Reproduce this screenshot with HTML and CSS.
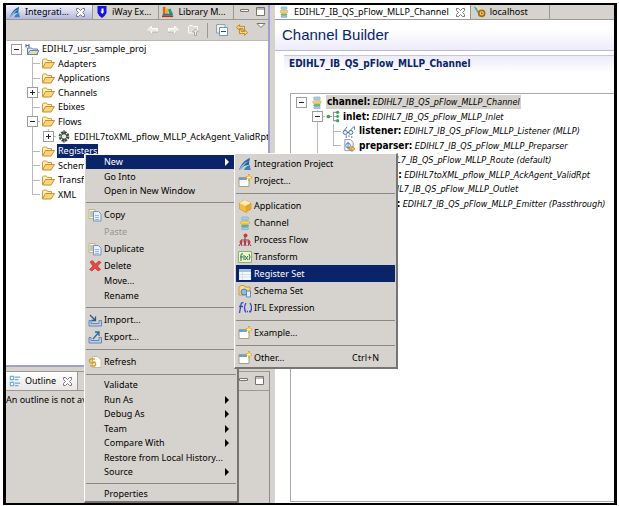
FILE: index.html
```html
<!DOCTYPE html>
<html lang="en">
<head>
<meta charset="utf-8">
<title>Channel Builder</title>
<link rel="stylesheet" href="styles.css">
</head>
<body>
<svg class="sprite" aria-hidden="true">
  <symbol id="folder" viewBox="0 0 14 12"><path d="M1.500 10V2.500l1-1h3l1 1.500h4V5" fill="#fff0b8" stroke="#cf9a3a"/><path d="M1.500 10.500L4.500 5h9L10 10.500z" fill="#fbd47c" stroke="#c98f2e"/></symbol>
  <symbol id="project" viewBox="0 0 14 12"><path d="M2.500 11V4.500h4l1 1h5V11z" fill="#dbe9fb" stroke="#4f7fc4"/><path d="M2.500 11L5 7h9l-2.500 4z" fill="#fbd98a" stroke="#4f8fc8"/><path d="M1 4V1l1.500 1.500L4 1v3" fill="none" stroke="#2b4f9c"/></symbol>
  <symbol id="gear" viewBox="0 0 14 14"><circle cx="7" cy="7" r="4.500" fill="none" stroke="#3c4a46" stroke-width="2.500" stroke-dasharray="2.400 1.100"/><circle cx="7" cy="7" r="3" fill="#e7f1e9" stroke="#333"/><path d="M7 0v4M5 2l2 2 2-2M5 12l2-2 2 2M7 10v4" fill="none" stroke="#333"/><path d="M2 5l3 2-3 2" fill="none" stroke="#4a9a58"/></symbol>
  <symbol id="swoosh" viewBox="0 0 14 14"><path d="M1 13C3 7 7 3 12 1c-1 3-1 5-1 7-3 0-6 1-10 5z" fill="#23639e"/><path d="M1 13c3-6 6-8 10-9-4 3-6 5-7 8z" fill="#7db4dc"/><path d="M6 13c1-3 3-4 6-5 0 2 0 3 1 5z" fill="#3b82bd"/></symbol>
  <symbol id="close" viewBox="0 0 11 11"><path d="M1.500 1.500h2l2 2 2-2h2v2l-2 2 2 2v2h-2l-2-2-2 2h-2v-2l2-2-2-2z" fill="#fff" stroke="#77777c"/></symbol>
  <symbol id="shield" viewBox="0 0 11 12"><path d="M1 0h9v7L8 10 5.500 12 3 10 1 7z" fill="#1414e0"/><path d="M5 2.500h2v4H5zM3.800 5.500h4L5.800 8z" fill="#fff"/></symbol>
  <symbol id="books" viewBox="0 0 14 12"><path d="M1 0h3v10H1z" fill="#e1661b"/><path d="M4 2h3v8H4z" fill="#f0b323"/><path d="M7 3l3-1 3 7-4 1z" fill="#2e9a5c"/><path d="M0 10h13v2H0z" fill="#b33518"/><path d="M1 8h11v2H1z" fill="#2c6fb7"/></symbol>
  <symbol id="minimize" viewBox="0 0 10 10"><path d="M.5 2.500h8v2h-8z" fill="#fff" stroke="#77746c"/></symbol>
  <symbol id="maximize" viewBox="0 0 10 10"><path d="M.5.5h8v8h-8z" fill="#fff" stroke="#77746c"/><path d="M0 2h9" stroke="#77746c"/></symbol>
  <symbol id="back" viewBox="0 0 12 10"><path d="M.5 5l4-4v2.500h6v3h-6V9z" fill="#eceae6" stroke="#fff"/><path d="M1 5.500l4 4M5 7h6" stroke="#b5b2ab" fill="none"/></symbol>
  <symbol id="forward" viewBox="0 0 12 10"><path d="M11.500 5l-4-4v2.500h-6v3h6V9z" fill="#eceae6" stroke="#fff"/><path d="M11 5.500l-4 4M1 7h6" stroke="#b5b2ab" fill="none"/></symbol>
  <symbol id="up" viewBox="0 0 12 12"><path d="M1.500 9V2.500l1-1h3l1 1h4V9z" fill="#dedbd6" stroke="#fbfaf8"/><path d="M7.500 11.500V8h-2l3-3 3 3h-2v3.500z" fill="#eee" stroke="#aaa79f"/></symbol>
  <symbol id="collapse" viewBox="0 0 12 12"><path d="M3 9H.5V.5H9V3" fill="#f5f1d8" stroke="#88a4c2"/><path d="M3.500 3.500h8v8h-8z" fill="#fff" stroke="#6b94c4"/><path d="M5 7.500h5" stroke="#1f4f96"/></symbol>
  <symbol id="sync" viewBox="0 0 14 14"><path d="M.5 4L4 .8v2h6v5H8V5.200H4v2z" fill="#fbd77a" stroke="#b77f21"/><path d="M13.500 10L10 13.200v-2H4v-5h2v2.600h4v-2z" fill="#fbd77a" stroke="#b77f21"/></symbol>
  <symbol id="chevron" viewBox="0 0 10 6"><path d="M1 .5h8L5 4.500z" fill="#fff" stroke="#77746c"/></symbol>
  <symbol id="channel" viewBox="0 0 12 14"><rect x="2.500" y="1" width="7" height="3" rx="1" fill="#a7cdf0" stroke="#7ba4cc" stroke-width=".6"/><rect x="1.500" y="5" width="9" height="3" rx="1" fill="#f8d45f" stroke="#c9a23b" stroke-width=".6"/><rect x="2.500" y="9" width="7" height="2" rx="1" fill="#72bb7f" stroke="#549e66" stroke-width=".6"/><rect x="2.500" y="11.500" width="7" height="2" rx="1" fill="#a7cdf0" stroke="#6f9acb" stroke-width=".6"/></symbol>
  <symbol id="localhost" viewBox="0 0 14 14"><path d="M0 1l6 2 2 6-4-1z" fill="#43a0b8"/><path d="M2 0h4l3 4-4 2z" fill="#e8e0a0"/><circle cx="9" cy="8.500" r="3.500" fill="#f4cf62" stroke="#a66b1c" stroke-width="2"/><circle cx="9" cy="8.500" r="1" fill="#7c4a18"/></symbol>
  <symbol id="inlet" viewBox="0 0 14 14"><path d="M2 7h4M12 2.500H7.500v9H12" fill="none" stroke="#8e9a92" stroke-width="1.200"/><path d="M8 7h4" stroke="#8e9a92"/><g fill="#3f9d5b"><circle cx="2" cy="7" r="2"/><circle cx="12" cy="2.500" r="1.700"/><circle cx="12" cy="7" r="1.500"/><circle cx="12" cy="11.500" r="1.700"/></g></symbol>
  <symbol id="listener" viewBox="0 0 14 14"><g fill="#e9f2fb" stroke="#44699e"><circle cx="3" cy="8" r="2.200"/><circle cx="9" cy="8" r="2.200"/><path d="M1 7l4-5M8 6l4-4h1v3M5 8h2" fill="none"/></g><path d="M4 11v3M7 11v2M10 12v2" stroke="#44699e"/></symbol>
  <symbol id="preparser" viewBox="0 0 14 14"><path d="M2.500.5h6l3 3v9h-9z" fill="#f5f8fd" stroke="#8797b3"/><circle cx="6" cy="7" r="2.500" fill="none" stroke="#5b77a8"/><path d="M6 3v8" stroke="#5b77a8"/><path d="M7 9.500h3v-2l3.500 3-3.500 3v-2H7z" fill="#f9bd4f" stroke="#c07a1c" stroke-width=".8"/></symbol>
  <symbol id="copy" viewBox="0 0 14 14"><path d="M1 1.500h6v9H1z" fill="#fff5d2" stroke="#c8b473"/><path d="M2 4h4M2 6h4M2 8h4" stroke="#7495c6"/><path d="M5.500 3.500h5l2.500 2.500v7H5.500z" fill="#e8f1fc" stroke="#7894bd"/><path d="M7 7.500h4M7 9.500h4M7 11.500h4" stroke="#9ab4d8"/></symbol>
  <symbol id="delete" viewBox="0 0 14 14"><path d="M2 3l2.500-1.500L7.500 5 11 2l2 1.500L9.500 7l3 3.500L10 12 7 9l-3 3-2.500-1.500L5 7z" fill="#e34a4a" stroke="#c02a30" stroke-width=".7"/></symbol>
  <symbol id="import" viewBox="0 0 14 14"><path d="M1 7.500h2v3h8v-3h2.500V13H1z" fill="#b9d0ea" stroke="#6488b3"/><path d="M2 2l5 5M7.500 3.500v4h-4" fill="none" stroke="#2d5785" stroke-width="1.300"/></symbol>
  <symbol id="export" viewBox="0 0 14 14"><path d="M1 7.500h2v3h8v-3h2.500V13H1z" fill="#b9d0ea" stroke="#6488b3"/><path d="M5 9l6-7M7 2h4v4" fill="none" stroke="#2d6ba5" stroke-width="1.300"/></symbol>
  <symbol id="refresh" viewBox="0 0 14 14"><path d="M4.500 1.500h5l3.500 3v8H4.500z" fill="#fff" stroke="#c9b98d"/><path d="M7 4H4a2 2 0 0 0-1 4h3M2 11h3a2 2 0 0 0 1-4H4" fill="none" stroke="#dba02c" stroke-width="1.500"/></symbol>
  <symbol id="newproject" viewBox="0 0 14 14"><path d="M1 3.500h10v9H1z" fill="#fff" stroke="#a8a078"/><path d="M1 4h8v2H1z" fill="#62a2dc"/><path d="M11 0v7M7.500 3.500h7" stroke="#dfa52d" stroke-width="2"/><path d="M11 1.500v4M9 3.500h4" stroke="#fff3b0"/></symbol>
  <symbol id="application" viewBox="0 0 14 14"><path d="M7 1l6 3v6l-5 3.500L1.500 10V4z" fill="#f5bd3f" stroke="#c99639" stroke-width=".7"/><path d="M7 1l6 3-5.500 3-6-3z" fill="#fff0b2"/><path d="M7.500 7L13 4v6l-5 3.500z" fill="#e8a32b"/></symbol>
  <symbol id="flow" viewBox="0 0 14 14"><path d="M7 4v3M3 10V7h8v3" fill="none" stroke="#555"/><g fill="#ce3846"><circle cx="7.500" cy="2.500" r="2"/><circle cx="3" cy="9" r="1.500"/><circle cx="7" cy="8.500" r="1.500"/><circle cx="11" cy="9" r="1.500"/></g><path d="M1 13l2-3 1 3M6 13l1-4 1 4M10 13l1-3 2 3" fill="none" stroke="#a33243"/></symbol>
  <symbol id="transform" viewBox="0 0 14 14"><path d="M.5 1.500h13v11H.5z" fill="#f2f3c7" stroke="#8fae73"/><path d="M5 4q-2-1-2 1v6M2 7h3M6 5v5M7 6l3 4M10 6l-3 4M11 4q2 3 0 6" fill="none" stroke="#28775b"/></symbol>
  <symbol id="register" viewBox="0 0 14 14"><path d="M1 2h12v11H1z" fill="#f4f8fc"/><path d="M1 2h12v3H1z" fill="#a9c1dd"/><path d="M1 7.500h12M1 10h12M4.500 5v8" stroke="#d5dfeb"/></symbol>
  <symbol id="schema" viewBox="0 0 14 14"><path d="M1 11V3l2-1.500h3L7 3h5v8z" fill="#fcdc89" stroke="#c9983e"/><circle cx="6" cy="8" r="3" fill="#8eb8e8" stroke="#4d80bd"/><path d="M8.500 7h4v6h-4z" fill="#e6effb" stroke="#608bc1"/></symbol>
  <symbol id="ifl" viewBox="0 0 14 14"><path d="M5.500 2q-2-1-2.500 1.500L1.500 12M1 5.500h4M8 2q-3 5 0 9.500M12 2q3 5 0 9.500M9 10.500h1M11 10.500h1" fill="none" stroke="#3348c4" stroke-width="1.300"/></symbol>
  <symbol id="outline" viewBox="0 0 14 14"><path d="M1.500 1.500h4v4h-4zM1.500 8.500h4v4h-4z" fill="#fff" stroke="#3188cf"/><path d="M7 2.500h6M7 5.500h4M7 9.500h6M7 12.500h4" stroke="#3188cf"/></symbol>
</svg>

<main class="frame">
  <section class="sidebar">
    <div class="view explorer">
      <div class="tabs">
        <button class="tab tab-active"><svg class="icon"><use href="#swoosh"/></svg><span>Integrati...</span><svg class="close"><use href="#close"/></svg></button>
        <button class="tab tab-idle"><svg class="icon"><use href="#shield"/></svg><span>iWay Ex...</span></button>
        <button class="tab tab-idle"><svg class="icon"><use href="#books"/></svg><span>Library M...</span></button>
        <div class="window-buttons window-buttons-top">
          <button aria-label="Minimize"><svg class="sizer"><use href="#minimize"/></svg></button>
          <button aria-label="Maximize"><svg class="sizer"><use href="#maximize"/></svg></button>
        </div>
      </div>
      <div class="toolbar">
        <button aria-label="Back"><svg class="tool"><use href="#back"/></svg></button>
        <button aria-label="Forward"><svg class="tool"><use href="#forward"/></svg></button>
        <button aria-label="Up"><svg class="tool"><use href="#up"/></svg></button>
        <span class="rule"></span>
        <button aria-label="Collapse all"><svg class="tool"><use href="#collapse"/></svg></button>
        <button aria-label="Link with editor"><svg class="tool"><use href="#sync"/></svg></button>
        <button aria-label="View menu" class="view-menu"><svg class="arrow-down"><use href="#chevron"/></svg></button>
      </div>
      <div class="tree-area">
        <ul class="tree">
          <li><i class="cell box open"></i><svg class="node"><use href="#project"/></svg><span>EDIHL7_usr_sample_proj</span></li>
          <li><i class="cell"></i><i class="cell tee"></i><svg class="node"><use href="#folder"/></svg><span>Adapters</span></li>
          <li><i class="cell"></i><i class="cell tee"></i><svg class="node"><use href="#folder"/></svg><span>Applications</span></li>
          <li><i class="cell"></i><i class="cell tee box"></i><svg class="node"><use href="#folder"/></svg><span>Channels</span></li>
          <li><i class="cell"></i><i class="cell tee"></i><svg class="node"><use href="#folder"/></svg><span>Ebixes</span></li>
          <li><i class="cell"></i><i class="cell tee box open"></i><svg class="node"><use href="#folder"/></svg><span>Flows</span></li>
          <li><i class="cell"></i><i class="cell line"></i><i class="cell elbow box"></i><svg class="node"><use href="#gear"/></svg><span>EDIHL7toXML_pflow_MLLP_AckAgent_ValidRpt</span></li>
          <li><i class="cell"></i><i class="cell tee"></i><svg class="node"><use href="#folder"/></svg><span class="selected">Registers</span></li>
          <li><i class="cell"></i><i class="cell tee"></i><svg class="node"><use href="#folder"/></svg><span>Schemas</span></li>
          <li><i class="cell"></i><i class="cell tee"></i><svg class="node"><use href="#folder"/></svg><span>Transforms</span></li>
          <li><i class="cell"></i><i class="cell elbow"></i><svg class="node"><use href="#folder"/></svg><span>XML</span></li>
        </ul>
      </div>
    </div>
    <div class="view outline">
      <div class="tabs">
        <button class="tab tab-plain"><svg class="icon"><use href="#outline"/></svg><span>Outline</span><svg class="close"><use href="#close"/></svg></button>
        <div class="window-buttons">
          <button aria-label="Minimize"><svg class="sizer"><use href="#minimize"/></svg></button>
          <button aria-label="Maximize"><svg class="sizer"><use href="#maximize"/></svg></button>
        </div>
      </div>
      <p>An outline is not available.</p>
    </div>
  </section>

  <section class="editor">
    <div class="tabs">
      <button class="tab tab-editor"><svg class="icon"><use href="#channel"/></svg><span>EDIHL7_IB_QS_pFlow_MLLP_Channel</span><svg class="close"><use href="#close"/></svg></button>
      <button class="tab tab-host"><svg class="icon"><use href="#localhost"/></svg><span>localhost</span></button>
    </div>
    <h1>Channel Builder</h1>
    <h2>EDIHL7_IB_QS_pFlow_MLLP_Channel</h2>
    <div class="canvas">
      <ul class="tree tree-channel">
        <li><i class="cell box open"></i><svg class="node"><use href="#channel"/></svg><span class="current"><b>channel:</b> <em>EDIHL7_IB_QS_pFlow_MLLP_Channel</em></span></li>
        <li><i class="cell"></i><i class="cell tee box open"></i><svg class="node"><use href="#inlet"/></svg><span><b>inlet:</b> <em>EDIHL7_IB_QS_pFlow_MLLP_Inlet</em></span></li>
        <li><i class="cell"></i><i class="cell line"></i><i class="cell tee"></i><svg class="node"><use href="#listener"/></svg><span><b>listener:</b> <em>EDIHL7_IB_QS_pFlow_MLLP_Listener (MLLP)</em></span></li>
        <li><i class="cell"></i><i class="cell line"></i><i class="cell elbow"></i><svg class="node"><use href="#preparser"/></svg><span><b>preparser:</b> <em>EDIHL7_IB_QS_pFlow_MLLP_Preparser</em></span></li>
        <li><i class="cell"></i><i class="cell tee box open"></i><svg class="node"><use href="#flow"/></svg><span><b>route:</b> <em>EDIHL7_IB_QS_pFlow_MLLP_Route (default)</em></span></li>
        <li><i class="cell"></i><i class="cell line"></i><i class="cell elbow"></i><svg class="node"><use href="#gear"/></svg><span><b>process:</b> <em>EDIHL7toXML_pflow_MLLP_AckAgent_ValidRpt</em></span></li>
        <li><i class="cell"></i><i class="cell elbow box open"></i><svg class="node"><use href="#inlet"/></svg><span><b>outlet:</b> <em>EDIHL7_IB_QS_pFlow_MLLP_Outlet</em></span></li>
        <li><i class="cell"></i><i class="cell"></i><i class="cell elbow"></i><svg class="node"><use href="#listener"/></svg><span><b>emitter:</b> <em>EDIHL7_IB_QS_pFlow_MLLP_Emitter (Passthrough)</em></span></li>
      </ul>
    </div>
  </section>

  <nav class="menu context-menu" aria-label="Context menu">
    <ul>
      <li class="more"><button class="active">New</button></li>
      <li><button>Go Into</button></li>
      <li><button>Open in New Window</button></li>
    </ul>
    <ul>
      <li class="tall"><button><svg><use href="#copy"/></svg>Copy</button></li>
      <li class="tall"><button disabled>Paste</button></li>
      <li class="tall"><button><svg><use href="#copy"/></svg>Duplicate</button></li>
      <li class="tall"><button><svg><use href="#delete"/></svg>Delete</button></li>
      <li><button>Move...</button></li>
      <li><button>Rename</button></li>
    </ul>
    <ul>
      <li class="tall"><button><svg><use href="#import"/></svg>Import...</button></li>
      <li class="tall"><button><svg><use href="#export"/></svg>Export...</button></li>
    </ul>
    <ul>
      <li class="tall"><button><svg><use href="#refresh"/></svg>Refresh</button></li>
    </ul>
    <ul>
      <li><button>Validate</button></li>
      <li class="more"><button>Run As</button></li>
      <li class="more"><button>Debug As</button></li>
      <li class="more"><button>Team</button></li>
      <li class="more"><button>Compare With</button></li>
      <li><button>Restore from Local History...</button></li>
      <li class="more"><button>Source</button></li>
    </ul>
    <ul>
      <li><button>Properties</button></li>
    </ul>
  </nav>

  <nav class="menu submenu" aria-label="New">
    <ul>
      <li class="tall"><button><svg><use href="#swoosh"/></svg>Integration Project</button></li>
      <li class="tall"><button><svg><use href="#newproject"/></svg>Project...</button></li>
    </ul>
    <ul>
      <li class="tall"><button><svg><use href="#application"/></svg>Application</button></li>
      <li class="tall"><button><svg><use href="#channel"/></svg>Channel</button></li>
      <li class="tall"><button><svg><use href="#flow"/></svg>Process Flow</button></li>
      <li class="tall"><button><svg><use href="#transform"/></svg>Transform</button></li>
      <li class="tall"><button class="active"><svg><use href="#register"/></svg>Register Set</button></li>
      <li class="tall"><button><svg><use href="#schema"/></svg>Schema Set</button></li>
      <li class="tall"><button><svg><use href="#ifl"/></svg>IFL Expression</button></li>
    </ul>
    <ul>
      <li class="tall"><button><svg><use href="#newproject"/></svg>Example...</button></li>
    </ul>
    <ul>
      <li class="tall"><button><svg><use href="#newproject"/></svg>Other...<kbd>Ctrl+N</kbd></button></li>
    </ul>
  </nav>
</main>
</body>
</html>
```
FILE: styles.css
```css
* { box-sizing: border-box; }

:root {
  --face: #d6d3ce;
  --navy: #0a246a;
  --edge: #9a9894;
}

body {
  margin: 0;
  padding: 3px 2px 1px 3px;
  min-height: 100vh;
  display: flex;
  background: #fff;
  color: #000;
  font: 9px/14px "Noto Sans", "DejaVu Sans Condensed", sans-serif;
}

ul { list-style: none; margin: 0; padding: 0; }

b, em, h2 { font-family: "DejaVu Sans Condensed", "DejaVu Sans", sans-serif; }
b, h2 { font-size: 10px; }

button {
  border: 0;
  padding: 0;
  background: none;
  color: inherit;
  font: inherit;
  text-align: left;
  white-space: nowrap;
}

svg { display: block; flex: none; }
.sprite { position: absolute; width: 0; height: 0; }

.frame {
  position: relative;
  flex: 1;
  display: grid;
  grid-template-columns: 264px minmax(0, 1fr);
  column-gap: 5px;
  border: solid #000;
  border-width: 2px 3px;
  background: var(--face);
  overflow: hidden;
}

.sidebar {
  display: grid;
  grid-template-rows: minmax(0, 1fr) 132px;
  row-gap: 4px;
  min-width: 0;
}

.view {
  display: flex;
  flex-direction: column;
  min-width: 0;
  border-right: 1px solid #8d8d92;
}

.explorer {
  border-right: 2px solid #a0a0d0;
  border-bottom: 2px solid #a0a0d0;
}

.outline { border-top: 1px solid var(--edge); }
.outline p { margin: 0; line-height: 17px; white-space: nowrap; }

.tabs {
  display: flex;
  height: 15px;
  border-bottom: 1px solid var(--edge);
}

.outline .tabs { height: 19px; }

.tab {
  display: flex;
  align-items: center;
  gap: 4px;
  padding: 0 4px 0 3px;
  border-right: 1px solid var(--edge);
}

.tab .icon { width: 12px; height: 12px; }
.tab .close { width: 11px; height: 11px; margin-left: 2px; }

.tab-active { background: linear-gradient(#f4f4fc, #b4b8dc); }
.tab-active .close { margin-right: 2px; }
.tab-idle { padding-right: 7px; }
.tab-plain { background: linear-gradient(#fff, #e9e7e4); }
.tab-editor { background: #fff; }
.tab-host { padding-right: 21px; }

.window-buttons {
  display: flex;
  gap: 6px;
  margin-left: auto;
  padding: 2px 4px;
}

.window-buttons-top { padding: 0 2px; }
.sizer { width: 10px; height: 10px; }

.toolbar {
  display: flex;
  align-items: center;
  justify-content: flex-end;
  gap: 8px;
  height: 21px;
  padding-right: 2px;
  border-bottom: 1px solid #bbb8b2;
}

.tool { width: 12px; height: 12px; }
.rule { width: 1px; height: 15px; background: var(--edge); }
.view-menu { align-self: flex-start; padding-top: 3px; }
.arrow-down { width: 10px; height: 6px; }

.tree-area {
  flex: 1;
  padding: 1px 2px;
  background: #fff;
  overflow: hidden;
}

.tree {
  display: grid;
  grid-auto-rows: 1fr;
  height: 160px;
}

.tree-channel { height: 116px; }

.tree li {
  display: flex;
  align-items: center;
  white-space: nowrap;
}

.tree li > span { padding: 0 1px; margin-left: 1px; }
.tree .node { width: 14px; height: 13px; margin: 0 1px; }
.tree .selected { background: var(--navy); color: #fff; }
.tree .current { background: var(--face); }

.cell {
  display: grid;
  place-items: center;
  flex: none;
  align-self: stretch;
  width: 16px;
  background-repeat: no-repeat;
  --dash: linear-gradient(#b8b8b8, #b8b8b8);
}

.line {
  background-image: var(--dash);
  background-position: 8px 0;
  background-size: 1px 100%;
}

.tee, .elbow {
  background-image: var(--dash), var(--dash);
  background-position: 8px 0, 8px 50%;
  background-size: 1px 100%, 8px 1px;
}

.elbow { background-size: 1px 50%, 8px 1px; }

.box::before {
  content: "";
  width: 9px;
  height: 9px;
  border: 1px solid #9c9c9c;
  background:
    linear-gradient(#222, #222) center / 5px 1px no-repeat,
    linear-gradient(#222, #222) center / 1px 5px no-repeat,
    #fff;
}

.box.open::before {
  background: linear-gradient(#222, #222) center / 5px 1px no-repeat, #fff;
}

.editor {
  display: flex;
  flex-direction: column;
  min-width: 0;
  background: #fff;
}

.editor .tabs { background: var(--face); }

h1 {
  margin: 0;
  padding: 0 7px;
  border-bottom: 1px solid #b9b9d6;
  background: linear-gradient(#fff 30%, #eeecfa);
  color: var(--navy);
  font: 15px/30px "Liberation Sans", sans-serif;
}

h2 {
  margin: 4px 0 0 9px;
  padding: 0 5px;
  border-top: 1px solid #c6c6dc;
  background: linear-gradient(#ecebfa, #fff);
  color: var(--navy);
  line-height: 16px;
}

.canvas {
  flex: 1;
  margin: 21px 0 1px 15px;
  padding: 1px 2px;
  border: solid #a9a9a9;
  border-width: 1px 0 1px 1px;
  overflow: hidden;
}

.menu {
  position: absolute;
  border: 1px solid #fff;
  border-right: 2px solid #777570;
  border-bottom: 2px solid #777570;
  background: var(--face);
}

.context-menu { left: 78px; top: 149px; width: 155px; padding: 0 1px; }
.submenu { left: 228px; top: 148px; width: 164px; padding: 1px; }

.menu ul + ul {
  margin-top: 4px;
  padding-top: 3px;
  border-top: 1px solid #8b8984;
}

.menu li { height: 14px; }
.menu li:nth-child(even) { height: 15px; }
.menu li.tall { height: 17px; }

.menu button {
  display: flex;
  align-items: center;
  width: 100%;
  height: 100%;
  padding-left: 18px;
}

.menu svg { width: 14px; height: 14px; margin: 0 2px 0 -16px; }
.menu .active { background: var(--navy); color: #fff; }
.menu button:disabled { color: #96938e; }

.more button::after {
  content: "";
  margin: 0 7px 0 auto;
  border: 4px solid transparent;
  border-left-color: currentColor;
  border-right-width: 0;
}

.menu kbd { margin: 0 16px 0 auto; font: inherit; }
```
